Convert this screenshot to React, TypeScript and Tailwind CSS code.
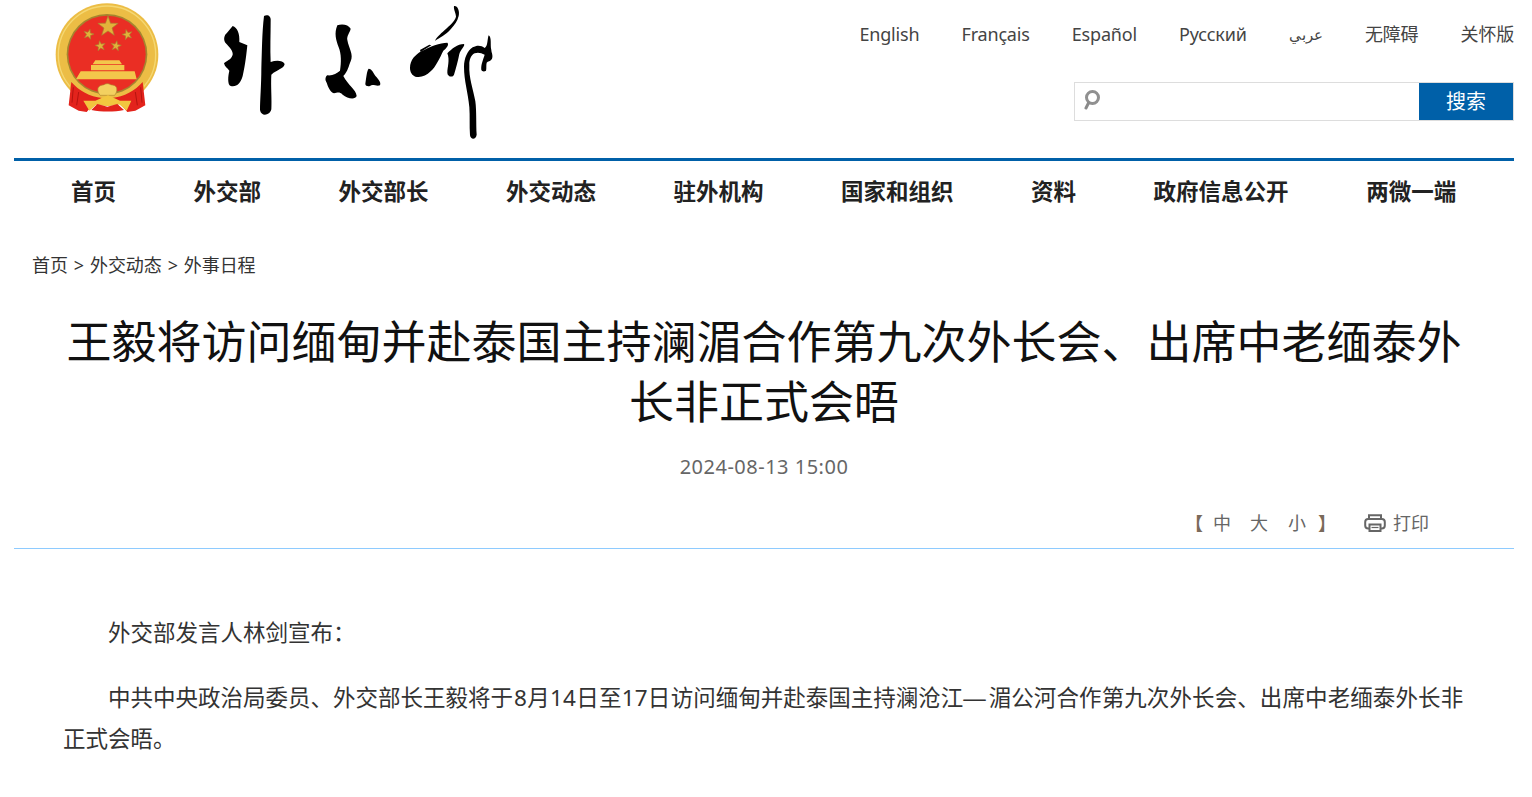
import React from "react";

const F = '"Noto Sans","Noto Sans CJK SC",sans-serif';

function Star({ cx, cy, r, rot = 0 }: { cx: number; cy: number; r: number; rot?: number }) {
  const pts: string[] = [];
  for (let i = 0; i < 10; i++) {
    const rad = i % 2 === 0 ? r : r * 0.4;
    const a = ((-90 + rot + i * 36) * Math.PI) / 180;
    pts.push(`${cx + rad * Math.cos(a)},${cy + rad * Math.sin(a)}`);
  }
  return <polygon points={pts.join(" ")} fill="#e3b23a" stroke="#a98030" strokeWidth="2" />;
}

function Logo() {
  return (
    <svg width="480" height="150" viewBox="0 0 1440 450" className="block">
      {/* emblem */}
      <circle cx="201" cy="164" r="154" fill="#ecbd45" />
      <circle cx="201" cy="164" r="146" fill="none" stroke="#f5d873" strokeWidth="4" />
      <circle cx="201" cy="163" r="121" fill="#a5842f" />
      <circle cx="201" cy="163" r="116" fill="#ea2e24" />
      <Star cx={204} cy={80} r={32} />
      <Star cx={146} cy={103} r={16} rot={15} />
      <Star cx={262} cy={104} r={16} rot={-15} />
      <Star cx={181} cy={138} r={16} rot={-10} />
      <Star cx={228} cy={138} r={16} rot={10} />
      <path d="M166 181h72l8 12h-88zM153 195h100v16H153zM122 214h162l6 24H108z" fill="#f3c64b" />
      <path d="M100 236c26 34 62 48 101 48s76 -14 103 -48l8 6v22l-60 40H156l-66 -40v-22z" fill="#ecbd45" />
      <path d="M86 316l8 -70c22 26 56 44 92 48l-22 14l-24 28l-24 -4z" fill="#e3231c" />
      <path d="M316 316l-8 -70c-22 26 -56 44 -92 48l22 14l24 28l24 -4z" fill="#e3231c" />
      <path d="M100 262l-4 46M116 276l-6 40M302 262l4 46M286 276l6 40" stroke="#b5140f" strokeWidth="3" />
      <path d="M174 264c6 -10 14 -8 18 -10c6 -4 14 -4 20 0c6 2 14 0 18 10c2 10 -2 16 -6 22h-44c-4 -6 -8 -12 -6 -22z" fill="#f3d060" stroke="#b08a30" strokeWidth="2" />
      <path d="M130 302h36l38 -16l36 16h34l-14 30l-26 -22l-30 8l-30 -8l-26 22z" fill="#f2c63f" />
      <path d="M154 330l18 -18l30 8l30 -8l20 18c-30 6 -66 6 -98 0z" fill="#e3231c" />
      {/* calligraphy logo */}
      <g fill="#000">
        <path d="M578 78c14 4 22 24 20 48l24 10c-2 20 -6 60 -14 92c-6 22 -18 34 -36 30c-10 -4 -8 -30 -4 -46c-6 -8 -14 -12 -16 -22c6 -8 22 -10 26 -26c2 -10 -8 -22 -22 -36c-6 -8 -4 -22 4 -28z" />
        <path d="M672 48c10 -6 22 0 20 14c0 40 -2 84 0 124c16 -6 36 -6 42 6c-2 14 -22 16 -40 32c-2 34 2 76 0 104c-4 18 -30 24 -34 2c0 -30 4 -76 4 -124c2 -50 2 -110 8 -158z" />
        <path d="M892 76c14 -6 34 -2 40 10c-2 12 -12 20 -10 34c4 24 20 44 10 64c-6 14 -8 30 -22 44c14 28 38 40 40 60c-4 12 -28 8 -42 -4c-10 -10 -16 -6 -26 -4c-12 -4 -18 -20 -22 -32c-6 -8 -4 -18 2 -22c16 2 28 -6 38 -14c4 -26 4 -50 -4 -70c-8 -22 -14 -42 -4 -66z" />
        <path d="M986 206c10 0 14 14 24 26c6 8 14 16 10 24c-12 4 -22 -6 -30 2c-6 2 -14 0 -14 -6c2 -10 4 -40 10 -46z" />
        <path d="M1242 18c10 -2 18 14 14 30c-4 16 -12 26 -24 40c-14 16 -34 26 -46 34c-2 -2 12 -18 22 -26c14 -14 36 -30 40 -46c0 -10 -8 -22 -6 -32z" />
        <path d="M1110 204c0 -24 16 -40 34 -50c26 -14 56 -26 78 -26c6 6 -2 16 -12 24c-10 20 -22 48 -38 62c-14 14 -30 20 -46 16c-10 -4 -16 -14 -16 -26z" />
        <path d="M1140 150l28 -16l6 2l-32 20zM1222 160c14 -14 30 -28 50 -28c4 6 -10 16 -14 30c-4 20 -10 44 -16 62c-4 10 -20 6 -20 -6c0 -16 8 -38 0 -58z" />
        <path d="M1272 200c0 -24 10 -48 26 -58c14 -8 26 -6 36 2c10 -4 8 -30 12 -38c10 6 4 30 8 44c0 8 6 16 2 26c-6 10 -12 6 -16 12c-2 8 0 18 -2 24c-6 4 -12 2 -14 -2c-2 -16 6 -32 10 -46c-10 -4 -18 -8 -30 -4c-12 6 -16 20 -16 34c-2 40 12 74 18 110c4 30 2 68 4 100c-2 16 -18 16 -20 2c-2 -30 0 -58 -2 -84c-4 -44 -16 -80 -16 -122z" />
      </g>
    </svg>
  );
}

function SearchIcon() {
  return (
    <svg width="20" height="24" viewBox="0 0 20 24" className="block">
      <circle cx="8.5" cy="7.5" r="6" fill="none" stroke="#909090" strokeWidth="3" />
      <path d="M4.5 13L2 18" stroke="#8a8a8a" strokeWidth="3" strokeLinecap="round" />
    </svg>
  );
}

function PrintIcon() {
  return (
    <svg width="22" height="20" viewBox="0 0 22 20" className="block" fill="none" stroke="#666" strokeWidth="2">
      <path d="M5 6V2.2h12V6" />
      <rect x="1.2" y="6" width="19.6" height="9.5" rx="3" />
      <rect x="5.5" y="11.5" width="11" height="6.5" fill="#fff" />
      <path d="M7.5 14.5h7" strokeWidth="1.2" />
    </svg>
  );
}

const langs = ["English", "Français", "Español", "Русский", "عربي", "无障碍", "关怀版"];
const nav = ["首页", "外交部", "外交部长", "外交动态", "驻外机构", "国家和组织", "资料", "政府信息公开", "两微一端"];

export default function App() {
  return (
    <div className="min-h-[797px] bg-white overflow-hidden" style={{ fontFamily: F }}>
      <div className="mx-[14px] w-[1500px]">
        <header className="flex justify-between h-[158px]">
          <div className="ml-[26px]">
            <Logo />
          </div>
          <div className="flex flex-col items-end">
            <ul className="flex gap-[42.2px] mt-[21px] h-[27px] items-center text-[18px] leading-[27px] text-[#444] tracking-[-0.2px]">
              {langs.map((l) => (
                <li key={l} className={l === "عربي" ? "text-[15px]" : ""}>{l}</li>
              ))}
            </ul>
            <div className="mt-[34px] flex w-[440px] h-[39px] border border-[#dddddd]">
              <div className="flex-1 flex items-center pl-[9px]">
                <SearchIcon />
              </div>
              <div className="w-[94px] h-[37px] bg-[#0060a8] text-white text-[20px] leading-[37px] text-center">搜索</div>
            </div>
          </div>
        </header>

        <nav className="border-t-[3px] border-[#0060a8] h-[67px] pl-[57px] flex gap-[77.5px] pt-[13px] text-[22.5px] leading-[36px] font-bold text-[#222]">
          {nav.map((n) => (
            <span key={n} className="whitespace-nowrap">{n}</span>
          ))}
        </nav>

        <div className="mt-[26px] pl-[18px] h-[28px] text-[18px] leading-[28px] text-[#333] flex gap-[6px] tracking-[-0.1px]">
          <span>首页</span><span>&gt;</span><span>外交动态</span><span>&gt;</span><span>外事日程</span>
        </div>

        <h1 className="mt-[33px] mx-[50px] text-center text-[45px] leading-[60px] font-normal text-[#111]">
          王毅将访问缅甸并赴泰国主持澜湄合作第九次外长会、出席中老缅泰外长非正式会晤
        </h1>

        <div className="mt-[20px] h-[30px] text-center text-[20px] leading-[30px] text-[#666] tracking-[0.5px]">2024-08-13 15:00</div>

        <div className="mt-[26px] h-[30px] flex items-center justify-end pr-[85px] text-[18px] text-[#666]">
          <span className="w-[18px] text-[#7a6a5a] font-bold">【</span>
          <span className="ml-[10px]">中</span>
          <span className="ml-[19px]">大</span>
          <span className="ml-[20px]">小</span>
          <span className="ml-[12px] w-[18px] text-[#7a6a5a] font-bold">】</span>
          <span className="ml-[28px]"><PrintIcon /></span>
          <span className="ml-[7px]">打印</span>
        </div>

        <div className="mt-[10px] h-px bg-[#8ecbff]" />

        <div className="mt-[64px] ml-[49px] mr-[40px] text-[22.5px] leading-[40px] text-[#333]">
          <p className="indent-[45px]">外交部发言人林剑宣布：</p>
          <p className="indent-[45px] mt-[25px]">
            中共中央政治局委员、外交部长王毅将于
            <span className="tracking-[0.25px] ml-px">8月14日至17日</span>
            访问缅甸并赴泰国主持澜沧江
            <span className="font-['Liberation_Sans'] tracking-[3px]">—</span>
            <span className="tracking-[0.1px]">湄公河合作第九次外长会、出席中老缅泰外长非</span>
            正式会晤。
          </p>
        </div>
      </div>
    </div>
  );
}
